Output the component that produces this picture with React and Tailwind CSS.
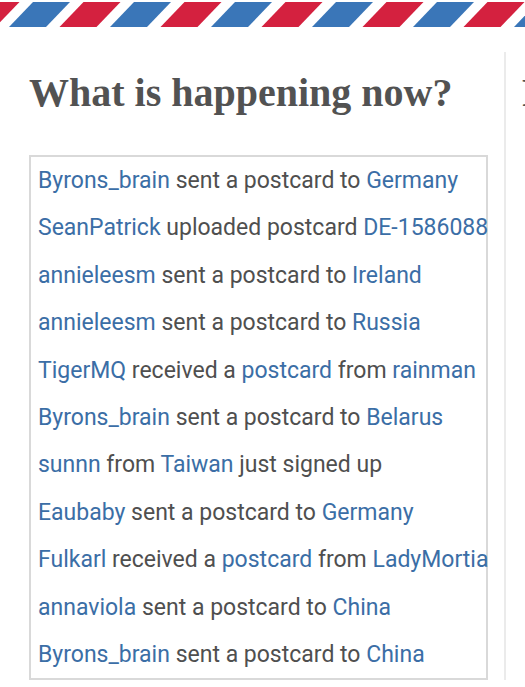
import React from "react";

const stripes = [];
for (let k = -1; k < 6; k++) {
  stripes.push({ x: 33 + 101 * k, color: "#3a76b8" });
  stripes.push({ x: 83.5 + 101 * k, color: "#d4213f" });
}

const events = [
  [["l", "Byrons_brain"], ["t", " sent a postcard to "], ["l", "Germany"]],
  [["l", "SeanPatrick"], ["t", " uploaded postcard "], ["l", "DE-1586088"]],
  [["l", "annieleesm"], ["t", " sent a postcard to "], ["l", "Ireland"]],
  [["l", "annieleesm"], ["t", " sent a postcard to "], ["l", "Russia"]],
  [["l", "TigerMQ"], ["t", " received a "], ["l", "postcard"], ["t", " from "], ["l", "rainman"]],
  [["l", "Byrons_brain"], ["t", " sent a postcard to "], ["l", "Belarus"]],
  [["l", "sunnn"], ["t", " from "], ["l", "Taiwan"], ["t", " just signed up"]],
  [["l", "Eaubaby"], ["t", " sent a postcard to "], ["l", "Germany"]],
  [["l", "Fulkarl"], ["t", " received a "], ["l", "postcard"], ["t", " from "], ["l", "LadyMortia"]],
  [["l", "annaviola"], ["t", " sent a postcard to "], ["l", "China"]],
  [["l", "Byrons_brain"], ["t", " sent a postcard to "], ["l", "China"]],
];

const AirmailBorder = () => (
  <svg width="525" height="28" viewBox="0 0 525 28" className="block">
    {stripes.map((s, i) => (
      <polygon
        key={i}
        points={`${s.x},2 ${s.x + 37},2 ${s.x + 13},27 ${s.x - 24},27`}
        fill={s.color}
      />
    ))}
  </svg>
);

const App = () => {
  return (
    <div className="w-[525px] h-[687px] overflow-hidden bg-white">
      <AirmailBorder />

      <div className="mt-6 flex">
        {/* Activity column */}
        <div className="w-[506px] shrink-0 border-r-2 border-[#ebebeb] pl-[29px] pr-[16px] pt-[17px]">
          <h2 className="font-['Liberation_Serif',serif] text-[40px] font-bold leading-[48px] text-[#525252] whitespace-nowrap">
            What is happening now?
          </h2>

          <ul className="mt-[38px] border-2 border-[#d9d9d9] pl-[7px] font-['Roboto',sans-serif] text-[23px] leading-[47.4px] text-[#4f4f4f]">
            {events.map((row, i) => (
              <li key={i} className="whitespace-nowrap">
                {row.map(([kind, text], j) =>
                  kind === "l" ? (
                    <a key={j} href="#" className="text-[#3b6ea6]">
                      {text}
                    </a>
                  ) : (
                    <span key={j}>{text}</span>
                  )
                )}
              </li>
            ))}
          </ul>
        </div>

        {/* Next column, cut off by the window */}
        <div className="pl-4 pt-[17px]">
          <h2 className="font-['Liberation_Serif',serif] text-[40px] font-bold leading-[48px] text-[#525252] whitespace-nowrap">
            Recently
          </h2>
        </div>
      </div>
    </div>
  );
};

export default App;
